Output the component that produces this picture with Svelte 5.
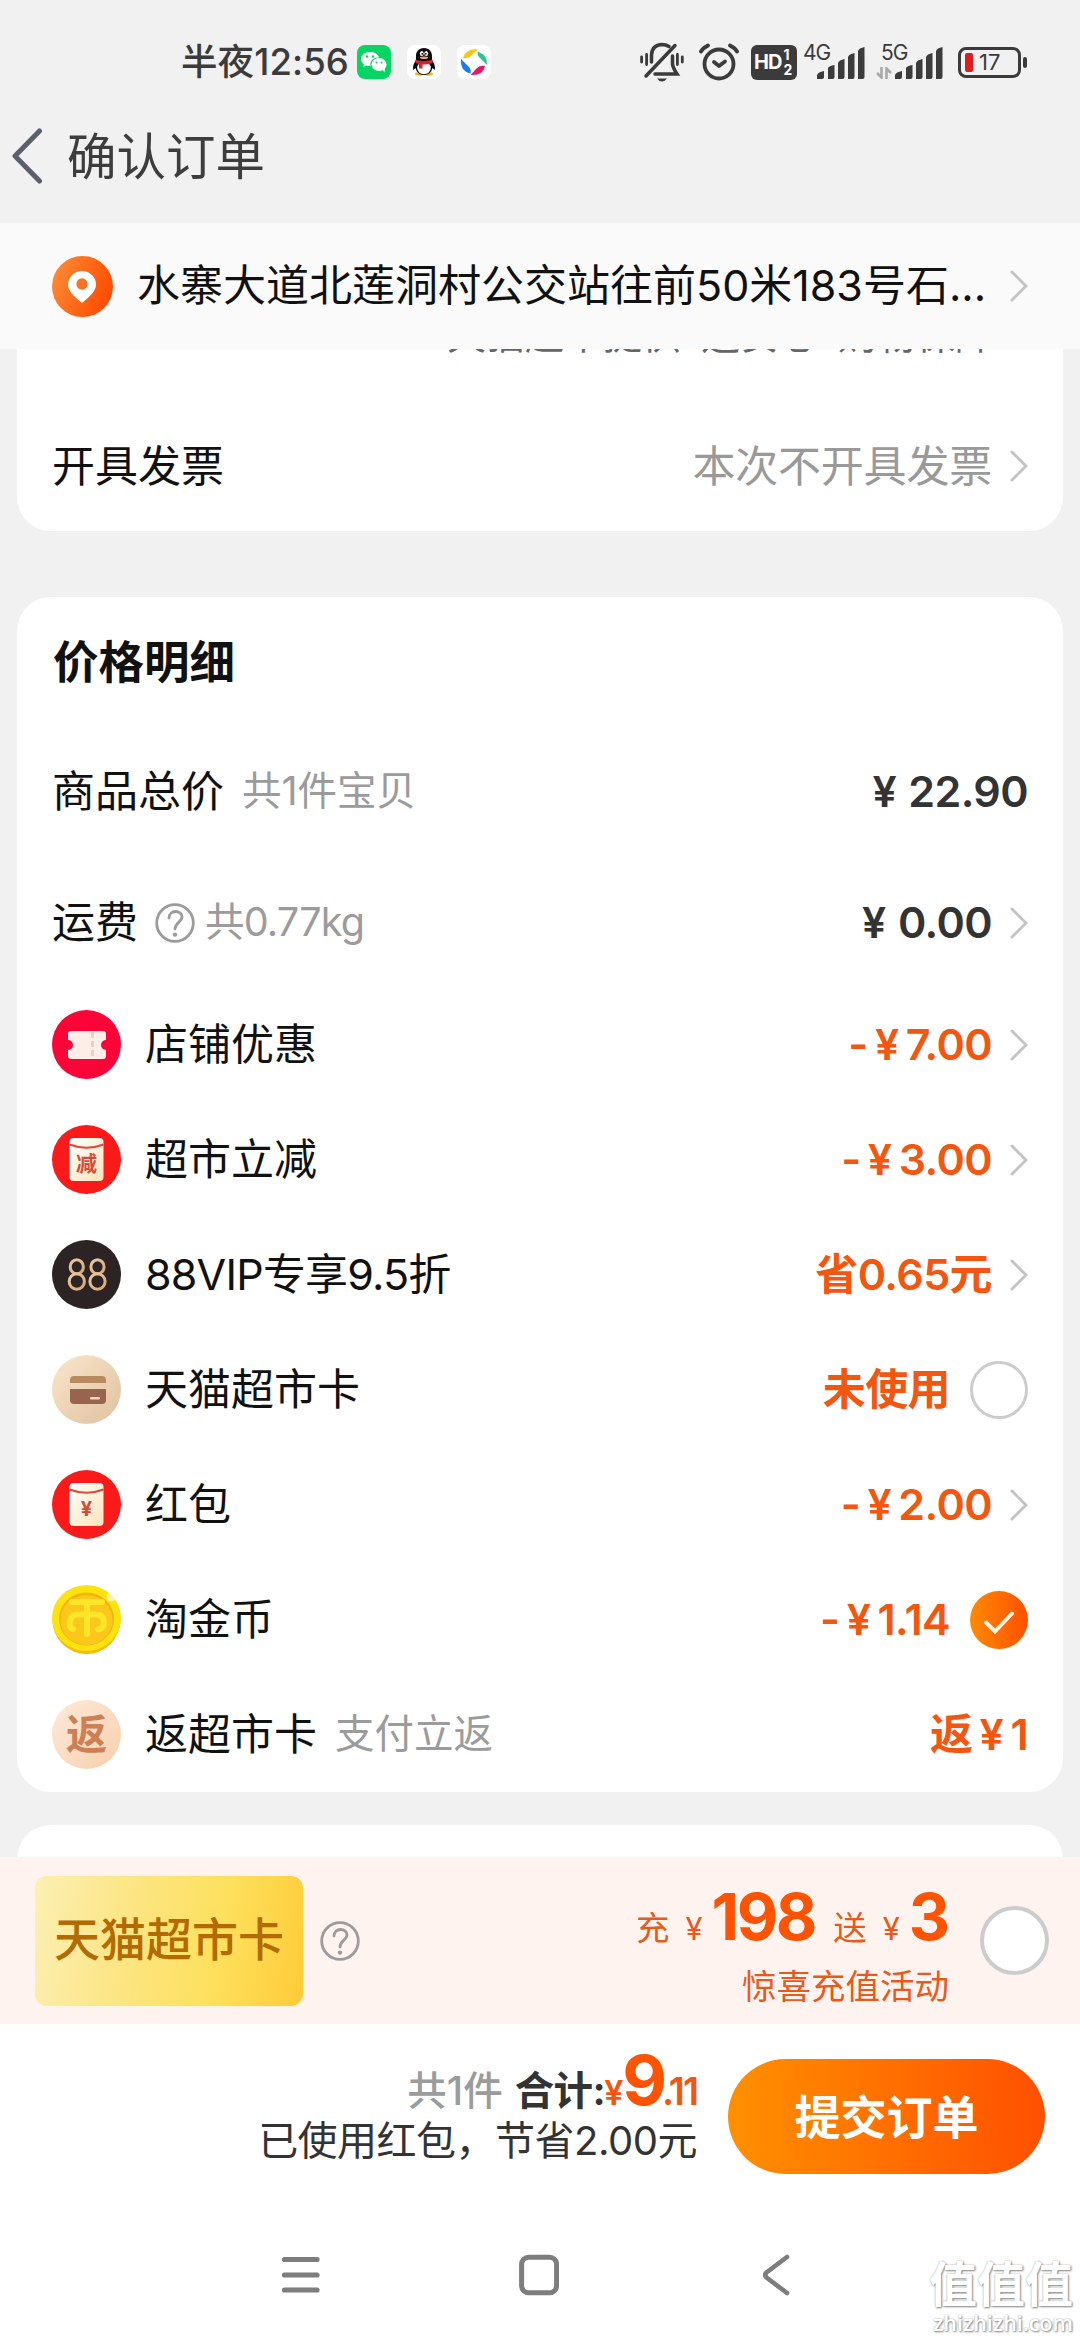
<script lang="ts">
  type Row = {
    icon: string;
    label: string;
    note?: string;
    value: string;
    end?: "arrow" | "off" | "on";
  };

  const rows: Row[] = [
    { icon: "coupon", label: "店铺优惠", value: "- ¥ 7.00", end: "arrow" },
    { icon: "cut", label: "超市立减", value: "- ¥ 3.00", end: "arrow" },
    { icon: "vip", label: "88VIP专享9.5折", value: "省0.65元", end: "arrow" },
    { icon: "card", label: "天猫超市卡", value: "未使用", end: "off" },
    { icon: "packet", label: "红包", value: "- ¥ 2.00", end: "arrow" },
    { icon: "coin", label: "淘金币", value: "- ¥ 1.14", end: "on" },
    { icon: "back", label: "返超市卡", note: "支付立返", value: "返 ¥ 1" },
  ];
</script>

{#snippet arrow()}
  <svg class="arrow" viewBox="0 0 18 32" width="18" height="32">
    <path d="M2 2 L16 16 L2 30" fill="none" stroke="#c4c4c4" stroke-width="3" stroke-linecap="round" />
  </svg>
{/snippet}

{#snippet help()}
  <svg class="help" viewBox="0 0 40 40" width="40" height="40" fill="none" stroke="#9b9b9b" stroke-width="2.8">
    <circle cx="20" cy="20" r="18.3" />
    <path d="M14 15 C14 6.5 27 6.5 27 14 C27 19 20 19.5 20 26" stroke-linecap="round" />
    <circle cx="20" cy="31.6" r="2.2" fill="#9b9b9b" stroke="none" />
  </svg>
{/snippet}

{#snippet signal()}
  <svg class="bars" viewBox="0 0 48 32" width="48" height="32" fill="#3b3b3b">
    <path d="M0 32 V28 Q1 25 7 24 V30 Q7 32 5 32Z" />
    <path d="M11 32 V21 Q12 19 17.500 18 V30 Q17.500 32 15.500 32Z" />
    <path d="M21 32 V16 Q22 13 27.500 12 V30 Q27.500 32 25.500 32Z" />
    <path d="M31 32 V10 Q32 7 37.500 6 V30 Q37.500 32 35.500 32Z" />
    <path d="M41 32 V4 Q42 1 47.500 0 V30 Q47.500 32 45.500 32Z" />
  </svg>
{/snippet}

{#snippet rowIcon(name: string)}
  <svg class="row-icon" viewBox="0 0 69 69" width="69" height="69">
    {#if name === "coupon"}
      <circle cx="34.500" cy="34.500" r="34.500" fill="#fb0437" />
      <path d="M19 21 H51 Q54 21 54 24 V30 A5 5 0 0 0 54 40 V46 Q54 49 51 49 H19 Q16 49 16 46 V40 A5 5 0 0 0 16 30 V24 Q16 21 19 21Z" fill="#ffede8" />
      <path d="M40.500 22 V48" stroke="#f3cdc2" stroke-width="3" stroke-dasharray="6 3" />
    {:else if name === "cut" || name === "packet"}
      <circle cx="34.500" cy="34.500" r="34.500" fill="#fb1a1a" />
      <rect x="17.500" y="13" width="34" height="43" rx="4" fill="url(#paper)" />
      <path d="M17.500 19.500 Q34.500 26 51.500 19.500" fill="none" stroke="#e2463c" stroke-width="2" />
      <text x="34.500" y={name === "cut" ? 46 : 46} class={name === "cut" ? "cut-char" : "yen-char"}>
        {name === "cut" ? "减" : "¥"}
      </text>
    {:else if name === "vip"}
      <circle cx="34.500" cy="34.500" r="34.500" fill="#2b2324" />
      <g fill="none" stroke="url(#gold)" stroke-width="3">
        <ellipse cx="24.800" cy="26.800" rx="6.600" ry="7" />
        <ellipse cx="24.800" cy="41.500" rx="7.600" ry="7.700" />
        <ellipse cx="45.500" cy="26.800" rx="6.600" ry="7" />
        <ellipse cx="45.500" cy="41.500" rx="7.600" ry="7.700" />
      </g>
    {:else if name === "card"}
      <circle cx="34.500" cy="34.500" r="34.500" fill="url(#sand)" />
      <path d="M18 28 V25 Q18 21 22 21 H50 Q54 21 54 25 V28Z" fill="#b98a60" />
      <path d="M18 34 H54 V45 Q54 49 50 49 H22 Q18 49 18 45Z" fill="#99644f" />
      <rect x="38" y="42" width="10" height="2.600" rx="1.300" fill="#f4d9bd" />
    {:else if name === "coin"}
      <circle cx="34.500" cy="35" r="34" fill="#f4bd0c" />
      <ellipse cx="34.500" cy="33" rx="34.500" ry="33" fill="#fde20e" />
      <ellipse cx="34.500" cy="34" rx="27.500" ry="26.500" fill="#f0b411" />
      <ellipse cx="34.500" cy="35" rx="26" ry="25" fill="#fac71a" />
      <path d="M20 17 H50 M35 17 V49 M21 44 Q16 42 18.500 35 Q19.500 29.500 26 29.500 H44 Q50.500 29.500 51.500 35 Q53.500 43 46 44.500" fill="none" stroke="#fde52a" stroke-width="6" stroke-linecap="round" />
      <circle cx="59" cy="12" r="4.500" fill="#fff" opacity="0.550" />
    {:else}
      <circle cx="34.500" cy="34.500" r="34.500" fill="url(#peach)" />
      <text x="34.500" y="49" class="back-char">返</text>
    {/if}
  </svg>
{/snippet}

<main>
  <svg class="defs" width="0" height="0">
    <defs>
      <linearGradient id="paper" x1="0" y1="0" x2="1" y2="1">
        <stop offset="0" stop-color="#fff" />
        <stop offset="1" stop-color="#fbe3b8" />
      </linearGradient>
      <linearGradient id="gold" x1="0" y1="0" x2="1" y2="1">
        <stop offset="0" stop-color="#ecc9a0" />
        <stop offset="1" stop-color="#d6a67c" />
      </linearGradient>
      <linearGradient id="sand" x1="0" y1="0" x2="1" y2="1">
        <stop offset="0" stop-color="#fae6cb" />
        <stop offset="1" stop-color="#dfc19f" />
      </linearGradient>
      <linearGradient id="peach" x1="0" y1="0" x2="1" y2="1">
        <stop offset="0" stop-color="#fdeadb" />
        <stop offset="1" stop-color="#f8cfab" />
      </linearGradient>
      <linearGradient id="orange" x1="0" y1="0" x2="1" y2="0">
        <stop offset="0" stop-color="#ff8a00" />
        <stop offset="1" stop-color="#ff5000" />
      </linearGradient>
    </defs>
  </svg>

  <div class="status">
    <span class="clock">半夜12:56</span>
    <div class="apps">
      <svg viewBox="0 0 34 34" width="34" height="34">
        <rect width="34" height="34" rx="8" fill="#07d563" />
        <path d="M13 7 C7.500 7 4 10.300 4 14 C4 16.200 5.200 18 7 19.300 L6.300 22 L9.600 20.500 Q11.500 21 13.500 21 A8 7 0 0 1 22 12.500 C21 9 17.500 7 13 7Z" fill="#fff" />
        <ellipse cx="22" cy="19.500" rx="7.500" ry="6.500" fill="#fff" />
        <path d="M25 24 L27.500 27.500 L28 22Z" fill="#fff" />
        <g fill="#07d563">
          <circle cx="10" cy="11.500" r="1.200" />
          <circle cx="16" cy="11.500" r="1.200" />
          <circle cx="19.500" cy="17.500" r="1" />
          <circle cx="24.500" cy="17.500" r="1" />
        </g>
      </svg>
      <svg viewBox="0 0 34 34" width="34" height="34">
        <rect width="34" height="34" rx="8" fill="#fff" />
        <ellipse cx="12.500" cy="29" rx="4.500" ry="1.700" fill="#f5b316" />
        <ellipse cx="21.500" cy="29" rx="4.500" ry="1.700" fill="#f5b316" />
        <path d="M17 3 C11.500 3 9 7 9 11 V15 C7 18 5.500 21 6 25 L8.500 23 C9.500 27.500 13 30 17 30 S24.500 27.500 25.500 23 L28 25 C28.500 21 27 18 25 15 V11 C25 7 22.500 3 17 3Z" fill="#0b0b0b" />
        <ellipse cx="17" cy="23" rx="6.800" ry="6.200" fill="#fff" />
        <ellipse cx="14.800" cy="8.500" rx="1.900" ry="2.500" fill="#fff" />
        <ellipse cx="19.200" cy="8.500" rx="1.900" ry="2.500" fill="#fff" />
        <circle cx="15.200" cy="8.800" r="0.900" />
        <circle cx="18.800" cy="8.800" r="0.900" />
        <ellipse cx="17" cy="12.700" rx="4" ry="1.300" fill="#f2a25c" />
        <path d="M8.500 14.500 Q17 18 25.500 14.500 V18 Q20 20 15.500 19.500 V23.500 H12 V19 L8.500 18Z" fill="#d8232e" />
      </svg>
      <svg viewBox="0 0 34 34" width="34" height="34">
        <rect width="34" height="34" rx="8" fill="#fff" />
        <path d="M6 13 Q9 3 21 4.500 L13 11.500 Q10 14 6 13Z" fill="#f9c612" />
        <path d="M20.500 6.500 Q31 10 30 20 L22.500 12.500 Q20 10 20.500 6.500Z" fill="#2dc58d" />
        <path d="M28 21 Q26 31 13.500 30 L20 23 Q23 20 28 21Z" fill="#ee1563" />
        <path d="M4 14 L12 22 Q14.500 25 13.500 28.500 Q3 26 4 14Z" fill="#1a7af0" />
      </svg>
    </div>
    <div class="indicators">
      <svg class="bell" viewBox="0 0 44 40" width="44" height="40" fill="none" stroke="#3b3b3b" stroke-width="3.500" stroke-linecap="round">
        <path d="M1.600 15 V20 M6.600 12.500 V22.500 M37.400 12.500 V22.500 M42.300 15 V20" stroke-width="2.800" />
        <path d="M11.500 20 V13 Q12 3 22 2.500 Q26 2.500 29 4.500" />
        <path d="M35 3.500 L6 34" />
        <path d="M32.500 14 V22 Q33 26 37 32 H15" />
        <path d="M17 36.500 H27 Q25 39.500 22 39.500 T17 36.500Z" fill="#3b3b3b" stroke="none" />
      </svg>
      <svg class="alarm" viewBox="0 0 40 38" width="40" height="38" fill="none" stroke="#3b3b3b" stroke-width="3.800" stroke-linecap="round">
        <circle cx="20" cy="21" r="14.500" />
        <path d="M2 8.500 Q4 5 9 2.500 M38 8.500 Q36 5 31 2.500" />
        <path d="M15 19 L20 23 L26 18.500" stroke-linejoin="round" />
      </svg>
      <span class="hd">HD<span class="sims"><i>1</i><i>2</i></span></span>
      <span class="net first"><small>4G</small>{@render signal()}</span>
      <span class="net">
        <small>5G</small>
        <svg class="updown" viewBox="0 0 16 12" width="16" height="12" fill="none" stroke="#a9a9a9" stroke-width="2.600">
          <path d="M5.500 0 V10.500 L1 6 M10.500 12 V1.500 L15 6" />
        </svg>
        {@render signal()}
      </span>
      <span class="battery"><b></b>17</span>
    </div>
  </div>

  <header>
    <svg viewBox="0 0 32 56" width="32" height="56">
      <path d="M28.500 3 L4 28 L28.500 53" fill="none" stroke="#5c5f6d" stroke-width="5" stroke-linecap="round" stroke-linejoin="round" />
    </svg>
    <h1>确认订单</h1>
  </header>

  <div class="address">
    <svg viewBox="0 0 61 61" width="61" height="61">
      <defs>
        <linearGradient id="pin" x1="0" y1="0.2" x2="1" y2="0.6">
          <stop offset="0" stop-color="#fd8c35" />
          <stop offset="1" stop-color="#ff4a00" />
        </linearGradient>
      </defs>
      <circle cx="30.500" cy="30.500" r="30.500" fill="url(#pin)" />
      <path d="M30 47 C22 40 16 35.500 16 28.500 A14 13.500 0 0 1 44 28.500 C44 35.500 38 40 30 47Z" fill="#fff" />
      <circle cx="30" cy="28" r="5.700" fill="#fb7127" />
    </svg>
    <span>水寨大道北莲洞村公交站往前50米183号石...</span>
    {@render arrow()}
  </div>

  <div class="scroll">
    <section class="card invoice">
      <p class="service">天猫超市提供<i></i>运安心<i></i>购物保障</p>
      <div class="line">
        <span>开具发票</span>
        <span class="value muted">本次不开具发票</span>
        {@render arrow()}
      </div>
    </section>

    <section class="card">
      <h2>价格明细</h2>
      <div class="line tall">
        <span>商品总价</span>
        <span class="note">共1件宝贝</span>
        <span class="value">¥ 22.90</span>
      </div>
      <div class="line tall freight">
        <span>运费</span>
        {@render help()}
        <span class="note">共0.77kg</span>
        <span class="value">¥ 0.00</span>
        {@render arrow()}
      </div>
      {#each rows as row (row.icon)}
        <div class="line item">
          {@render rowIcon(row.icon)}
          <span class:tight={row.icon === "vip"}>{row.label}</span>
          {#if row.note}<span class="note">{row.note}</span>{/if}
          <span class="value">{row.value}</span>
          {#if row.end === "arrow"}
            {@render arrow()}
          {:else if row.end === "off"}
            <span class="radio"></span>
          {:else if row.end === "on"}
            <svg class="check" viewBox="0 0 58 58" width="58" height="58">
              <circle cx="29" cy="29" r="29" fill="url(#orange)" />
              <path d="M16 31.500 L25 40.500 L42 22.500" fill="none" stroke="#fff4e4" stroke-width="4" stroke-linecap="round" />
            </svg>
          {/if}
        </div>
      {/each}
    </section>

    <section class="card next"></section>
  </div>

  <div class="promo">
    <div class="gift">天猫超市卡</div>
    {@render help()}
    <div class="offer">
      <p class="amounts">
        <span>充</span><span class="yen">¥</span><strong>198</strong>
        <span class="send">送</span><span class="yen">¥</span><strong class="three">3</strong>
      </p>
      <p>惊喜充值活动</p>
    </div>
    <span class="radio big"></span>
  </div>

  <footer>
    <div class="sum">
      <p class="total">
        <span class="count">共1件</span><span class="all">合计:</span><span class="cur">¥</span><strong>9</strong><span class="cents">.11</span>
      </p>
      <p class="saved">已使用红包，节省2.00元</p>
    </div>
    <button>提交订单</button>
  </footer>

  <nav>
    <svg viewBox="0 0 40 42" width="40" height="42" stroke="#7d7d7d" stroke-width="5.200" stroke-linecap="round">
      <path d="M3.500 5.500 H36 M3.500 21 H36 M3.500 36 H36" />
    </svg>
    <svg viewBox="0 0 40 42" width="40" height="42">
      <rect x="2.600" y="3.300" width="35" height="35.500" rx="7" fill="none" stroke="#7d7d7d" stroke-width="5" />
    </svg>
    <svg viewBox="0 0 40 42" width="40" height="42">
      <path d="M30 3 L9.500 18.500 Q7 21 9.500 23.500 L30 39" fill="none" stroke="#7d7d7d" stroke-width="4.600" stroke-linecap="round" />
    </svg>
  </nav>

  <div class="watermark">
    <b>值值值</b>
    <span>zhizhizhi.com</span>
  </div>
</main>

<style>
  :global(body) {
    margin: 0;
  }

  main {
    position: relative;
    display: flex;
    flex-direction: column;
    width: 1080px;
    height: 2340px;
    overflow: hidden;
    background: #f1f1f1;
    color: #111;
    font-family: Inter, "Noto Sans CJK SC", sans-serif;
    font-size: 43px;
    line-height: 1;
    white-space: nowrap;
  }
  p,
  h1,
  h2 {
    margin: 0;
  }
  i {
    font-style: normal;
  }
  svg {
    display: block;
    flex: none;
  }
  .defs {
    position: absolute;
  }

  .status {
    display: flex;
    align-items: center;
    height: 124px;
    box-sizing: border-box;
    padding: 0 53px 0 181px;
    color: #3b3b3b;
  }
  .clock {
    width: 176px;
    font-size: 36.5px;
    font-weight: 500;
    letter-spacing: 0.1px;
  }
  .apps {
    display: flex;
    gap: 16px;
  }
  .indicators {
    display: flex;
    align-items: center;
    margin-left: auto;
  }
  .alarm {
    margin: 0 12px 0 15px;
  }
  .hd {
    display: flex;
    align-items: center;
    width: 46px;
    height: 35px;
    box-sizing: border-box;
    padding-left: 3px;
    border-radius: 6px;
    background: #3b3b3b;
    color: #fff;
    font-size: 20px;
    font-weight: 700;
    letter-spacing: -1px;
  }
  .sims {
    display: flex;
    flex-direction: column;
    margin-left: 2px;
    font-size: 14px;
    line-height: 15px;
  }
  .net {
    position: relative;
    display: flex;
    width: 62px;
    height: 34px;
    align-items: flex-end;
    justify-content: flex-end;
    margin-left: 16px;
  }
  .net.first {
    margin-left: 6px;
  }
  .net small {
    position: absolute;
    left: 0;
    top: -3px;
    font-size: 21px;
    letter-spacing: -1px;
  }
  .updown {
    margin-right: 3px;
  }
  .battery {
    position: relative;
    display: flex;
    align-items: center;
    width: 63px;
    height: 31px;
    box-sizing: border-box;
    margin: 0 6px 0 15px;
    padding-left: 4px;
    border: 3px solid #3b3b3b;
    border-radius: 8px;
    font-size: 22px;
  }
  .battery b {
    width: 8px;
    height: 19px;
    margin-right: 6px;
    border-radius: 2px;
    background: #e11b1b;
  }
  .battery::after {
    position: absolute;
    right: -9px;
    top: 7px;
    width: 4px;
    height: 11px;
    border-radius: 2px;
    background: #3b3b3b;
    content: "";
  }

  header {
    display: flex;
    align-items: center;
    height: 99px;
    box-sizing: border-box;
    padding: 0 0 35px 11px;
    color: #3d3d3d;
  }
  h1 {
    margin-left: 24px;
    font-size: 49.5px;
    font-weight: 400;
    line-height: 52px;
    padding-top: 2px;
  }

  .address {
    display: flex;
    align-items: center;
    height: 126px;
    box-sizing: border-box;
    padding: 0 52px 0 52px;
    background: #fafafa;
  }
  .address span {
    margin: 0 auto 2px 24px;
  }

  .scroll {
    display: flex;
    flex-direction: column;
    height: 1508px;
    overflow: hidden;
  }
  .card {
    flex: none;
    box-sizing: border-box;
    margin: 0 17px 66px 17px;
    padding: 0 35px 0 36px;
    border-radius: 34px;
    background: #fff;
  }
  .invoice {
    height: 182px;
    border-radius: 0 0 34px 34px;
  }
  .service {
    height: 52px;
    margin-top: -36px;
    padding-right: 34px;
    color: #666;
    font-size: 39px;
    line-height: 44px;
    text-align: right;
  }
  .service i {
    display: inline-block;
    width: 20px;
  }
  .invoice .line {
    height: 202px;
  }
  .card:nth-child(2) {
    margin-bottom: 33px;
  }
  .next {
    height: 120px;
  }
  h2 {
    height: 128px;
    font-size: 45.5px;
    font-weight: 700;
    line-height: 132px;
  }
  .line {
    display: flex;
    align-items: center;
    height: 115px;
  }
  .line > span:first-child {
    margin-left: -1px;
  }
  .tall {
    height: 129px;
    padding-top: 2px;
  }
  .row-icon {
    margin: 0 24px 0 -1px;
  }
  .tight {
    letter-spacing: -0.8px;
  }
  .note {
    margin-left: 18px;
    color: #9b9b9b;
    font-size: 39.5px;
  }
  .help {
    margin-left: 17px;
  }
  .freight .note {
    margin-left: 10px;
    letter-spacing: -0.8px;
  }
  .value {
    margin-left: auto;
    color: #333;
    font-size: 43px;
    font-weight: 600;
    letter-spacing: -0.6px;
    word-spacing: 2px;
  }
  .item .value {
    color: #f4560f;
    word-spacing: -3px;
  }
  .value.muted {
    color: #999;
    font-weight: 400;
    letter-spacing: -0.2px;
  }
  .arrow {
    margin-left: 18px;
  }
  .radio {
    flex: none;
    width: 58px;
    height: 58px;
    box-sizing: border-box;
    margin-left: 20px;
    border: 3px solid #ccc;
    border-radius: 50%;
    background: #fff;
  }
  .check {
    margin-left: 20px;
  }
  .row-icon text {
    font-weight: 700;
    text-anchor: middle;
  }
  .cut-char {
    fill: #d34a3a;
    font-size: 21px;
  }
  .yen-char {
    fill: #d34a3a;
    font-size: 20px;
  }
  .row-icon .back-char {
    fill: #cd7f55;
    font-size: 41px;
  }

  .promo {
    display: flex;
    align-items: center;
    height: 167px;
    box-sizing: border-box;
    padding: 0 31px 0 35px;
    background: #fff3ef;
    color: #e85a1c;
  }
  .gift {
    width: 268px;
    height: 130px;
    border-radius: 12px;
    background: linear-gradient(100deg, #fbf0b4 0%, #fce583 35%, #fde05c 68%, #fecb38 100%);
    color: #b36a00;
    font-size: 46px;
    font-weight: 500;
    line-height: 126px;
    text-align: center;
  }
  .offer {
    margin-left: auto;
    padding-top: 9px;
    font-size: 34.5px;
    text-align: right;
  }
  .amounts {
    display: flex;
    align-items: baseline;
    justify-content: flex-end;
    margin-bottom: 21px;
    font-size: 33.5px;
  }
  .amounts strong {
    margin-left: 9px;
    color: #fd5303;
    font-size: 64px;
    letter-spacing: -2.4px;
  }
  .yen {
    margin-left: 16px;
    font-size: 31px;
  }
  .send {
    margin-left: 18px;
  }
  .amounts .three {
    letter-spacing: -1px;
  }
  .radio.big {
    width: 69px;
    height: 69px;
    margin-left: 31px;
    border-width: 4px;
  }

  footer {
    display: flex;
    align-items: center;
    justify-content: flex-end;
    height: 186px;
    box-sizing: border-box;
    padding: 0 35px 1px 0;
    background: #fff;
    color: #333;
  }
  .sum {
    margin: 0 31px 27px 0;
    text-align: right;
  }
  .total {
    display: flex;
    align-items: baseline;
    justify-content: flex-end;
    font-size: 39.5px;
    font-weight: 500;
  }
  .count {
    color: #9b9b9b;
  }
  .all {
    margin-left: 12px;
    font-weight: 700;
    letter-spacing: -0.6px;
  }
  .cur {
    margin-left: -1px;
    color: #f4560f;
    font-size: 34px;
    font-weight: 600;
    letter-spacing: -1px;
  }
  .total strong {
    color: #fd5303;
    font-size: 69px;
    letter-spacing: -5px;
  }
  .cents {
    color: #f4560f;
    font-size: 38px;
    font-weight: 600;
    letter-spacing: -2px;
  }
  .saved {
    margin-top: 6px;
    font-size: 40px;
    letter-spacing: -0.5px;
  }
  button {
    width: 317px;
    height: 115px;
    padding: 0;
    border: 0;
    border-radius: 58px;
    background: linear-gradient(90deg, #ff9000, #ff5000);
    color: #fff;
    font: inherit;
    font-size: 46px;
    font-weight: 700;
  }

  nav {
    display: flex;
    flex: 1;
    align-items: center;
    gap: 198px;
    box-sizing: border-box;
    padding: 0 0 0 281px;
    background: #fff;
  }

  .watermark {
    position: absolute;
    right: 7px;
    bottom: 5px;
    display: flex;
    flex-direction: column;
    align-items: flex-end;
    color: #fff;
    text-shadow: 1px 1px 2px #888, 0 0 2px #aaa;
  }
  .watermark b {
    font-size: 48px;
    line-height: 52px;
  }
  .watermark span {
    font-family: "Open Sans", sans-serif;
    font-size: 21.5px;
    font-weight: 600;
    line-height: 24px;
  }
</style>
